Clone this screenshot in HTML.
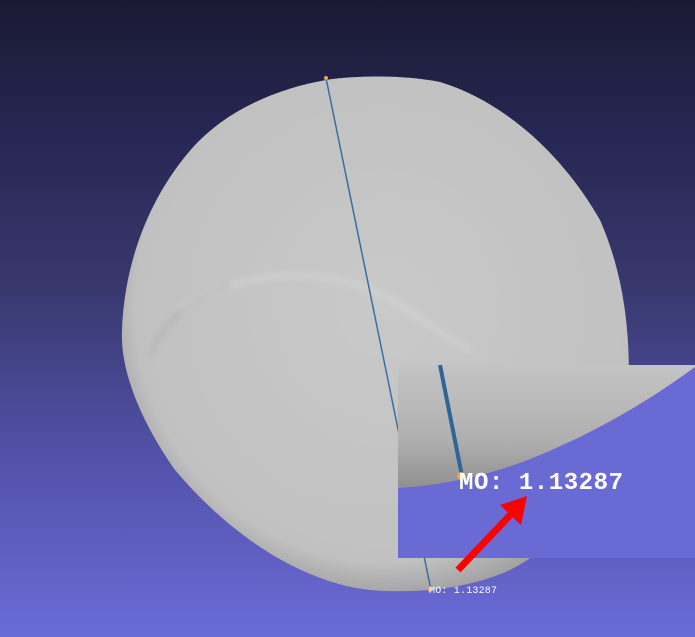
<!DOCTYPE html>
<html><head><style>
html,body{margin:0;padding:0;width:695px;height:637px;overflow:hidden}
body{background:linear-gradient(180deg,#1a1a33 0%,#262652 20%,#38386e 45%,#5050a6 70%,#6b6bd8 100%);position:relative;font-family:"Liberation Mono",monospace}
svg{position:absolute;left:0;top:0}
</style></head><body>
<svg width="695" height="637" viewBox="0 0 695 637">
<defs>
<radialGradient id="g" cx="0.52" cy="0.45" r="0.58">
<stop offset="0" stop-color="#c9c9c9"/><stop offset="0.85" stop-color="#c1c1c1"/><stop offset="1" stop-color="#9a9a9a"/>
</radialGradient>
<linearGradient id="ig" x1="0" y1="0" x2="0" y2="1">
<stop offset="0" stop-color="#c4c4c4"/><stop offset="0.6" stop-color="#b0b0b0"/><stop offset="1" stop-color="#909090"/>
</linearGradient>
<filter id="b"><feGaussianBlur stdDeviation="3"/></filter>
</defs>
<path d="M326,80 C350,76 400,74 440,82 C500,100 560,150 600,220 C622,270 632,330 628,400 C620,470 570,540 510,570 C470,588 420,594 370,590 C300,582 230,535 175,470 C140,420 120,370 122,330 C124,270 145,200 195,145 C230,108 280,88 326,80Z" fill="url(#g)"/>
<path d="M180,310 C240,270 330,260 400,305 C430,325 450,340 470,350" stroke="#d4d4d4" stroke-width="7" fill="none" opacity="0.6" filter="url(#b)"/>
<path d="M150,355 C165,320 190,300 230,285" stroke="#a8a8a8" stroke-width="5" fill="none" opacity="0.4" filter="url(#b)"/>
<line x1="326" y1="78" x2="431" y2="590" stroke="#3a6ea0" stroke-width="1.5"/>
<circle cx="326" cy="78" r="2" fill="#f0a050"/>
<rect x="398" y="365" width="297" height="193" fill="#6a6ad4"/>
<path d="M398,365 L695,365 L695,367 C650,400 600,430 540,455 C500,472 450,485 398,488Z" fill="url(#ig)"/>
<line x1="440" y1="365" x2="462" y2="476" stroke="#2e6496" stroke-width="4"/>
<circle cx="461" cy="476" r="4" fill="#f0a050"/>
<text x="459" y="489" font-family="Liberation Mono,monospace" font-size="24" font-weight="bold" fill="#ffffff" textLength="164">MO: 1.13287</text>
<line x1="458" y1="570" x2="515" y2="510" stroke="#ff0000" stroke-width="7"/>
<polygon points="527,496 500,505 521,525" fill="#ff0000"/>
<circle cx="430" cy="590" r="2" fill="#f0a050"/>
<text x="429" y="593" font-family="Liberation Mono,monospace" font-size="10" fill="#ffffff" textLength="68">MO: 1.13287</text>
</svg>
</body></html>
